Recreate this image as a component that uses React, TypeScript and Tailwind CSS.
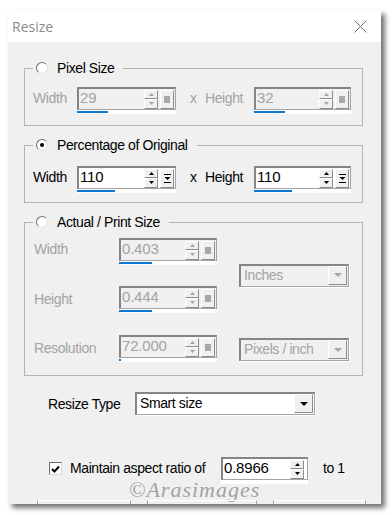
import React from "react";

const sans = "font-['Liberation_Sans',Arial,sans-serif] text-[14px] tracking-[-0.4px]";

function Arrow({ up, color }: { up?: boolean; color: string }) {
  return (
    <svg width="5" height="3" viewBox="0 0 5 3">
      <path d={up ? "M2.5 0L5 3H0z" : "M0 0H5L2.5 3z"} fill={color} />
    </svg>
  );
}

const raised =
  "bg-[#f0f0f0] border border-t-white border-l-white border-r-[#8c8c8c] border-b-[#8c8c8c]";

function SpinBtns({ disabled }: { disabled?: boolean }) {
  const c = disabled ? "#a5a5a5" : "#000";
  return (
    <div className="flex flex-col w-[14px] h-[19px] self-center">
      <div className={`flex-1 flex items-center justify-center ${raised}`}>
        <Arrow up color={c} />
      </div>
      <div className={`flex-1 flex items-center justify-center ${raised}`}>
        <Arrow color={c} />
      </div>
    </div>
  );
}

function ExtraBtn({ disabled }: { disabled?: boolean }) {
  return (
    <div className={`ml-[2px] mr-[1px] w-[14px] h-[19px] self-center flex items-center justify-center ${raised}`}>
      {disabled ? (
        <div className="w-[6px] h-[7px] bg-[#a8a8a8]" />
      ) : (
        <svg width="7" height="9" viewBox="0 0 7 9">
          <path d="M0 0.5H7" stroke="#000" strokeWidth="1" />
          <path d="M0.5 3H6.5L3.5 6z" fill="#000" />
          <path d="M0 8.5H7" stroke="#000" strokeWidth="1" />
        </svg>
      )}
    </div>
  );
}

function SpinInput({
  value,
  disabled,
  width,
  bar,
  extra = true,
}: {
  value: string;
  disabled?: boolean;
  width: string;
  bar?: string;
  extra?: boolean;
}) {
  return (
    <div className={`flex flex-col ${width}`}>
      <div
        className={`flex h-[23px] border-t-2 border-l-2 border-t-[#858585] border-l-[#858585] border-r border-b border-r-[#a3a3a3] border-b-[#a3a3a3] ${
          disabled ? "bg-[#f0f0f0] text-[#a3a3a3]" : "bg-white text-black"
        }`}
      >
        <div className="flex-1 pl-[1px] text-[15px] tracking-[-0.2px] leading-[17px]">{value}</div>
        <SpinBtns disabled={disabled} />
        {extra ? <ExtraBtn disabled={disabled} /> : <div className="w-[3px]" />}
      </div>
      <div className="h-[4px] bg-white pt-[1px]">
        {bar && <div className={`h-[2px] bg-[#0a78d4] ${bar}`} />}
      </div>
    </div>
  );
}

function Dropdown({ value, disabled, width }: { value: string; disabled?: boolean; width: string }) {
  return (
    <div className={`${width} border-r border-b border-white`}>
      <div
        className={`flex h-[23px] border-t-2 border-l-2 border-t-[#858585] border-l-[#858585] border-r border-b border-r-[#a3a3a3] border-b-[#a3a3a3] ${
          disabled ? "bg-[#f0f0f0] text-[#a3a3a3]" : "bg-white text-black"
        }`}
      >
        <div className="flex-1 pl-[3px] leading-[19px]">{value}</div>
        <div className={`w-[19px] h-[19px] mr-[1px] flex items-center justify-center ${raised}`}>
          <svg width="8" height="4" viewBox="0 0 8 4">
            <path d="M0 0H8L4 4z" fill={disabled ? "#a5a5a5" : "#000"} />
          </svg>
        </div>
      </div>
    </div>
  );
}

function Radio({ checked }: { checked?: boolean }) {
  return (
    <div className="w-[12px] h-[12px] rounded-full bg-white border border-t-[#6d6d6d] border-l-[#6d6d6d] border-r-[#e2e2e2] border-b-[#e2e2e2] flex items-center justify-center">
      {checked && <div className="w-[4px] h-[4px] rounded-full bg-black" />}
    </div>
  );
}

function Group({
  title,
  checked,
  className,
  children,
}: {
  title: string;
  checked?: boolean;
  className: string;
  children: React.ReactNode;
}) {
  return (
    <fieldset className={`ml-[16px] w-[339px] min-w-0 border border-[#b4b4b4] pl-[8px] pr-[8px] ${className}`}>
      <legend className="pl-[3px] pr-[9px]">
        <div className="flex items-center h-[16px] gap-[9px] text-black">
          <Radio checked={checked} />
          <span>{title}</span>
        </div>
      </legend>
      {children}
    </fieldset>
  );
}

export default function App() {
  return (
    <div className={`w-[392px] h-[515px] bg-white overflow-hidden ${sans}`}>
      <div className="mt-[10px] ml-[8px] w-[373px] h-[494px] shadow-[4px_4px_5px_rgba(0,0,0,0.55)] flex flex-col">
        <div className="h-[32px] bg-white flex items-center justify-between pl-[4px] pr-[14px]">
          <span className="font-['Open_Sans',sans-serif] text-[14px] tracking-normal text-[#8a8a8a]">
            Resize
          </span>
          <svg width="13" height="13" viewBox="0 0 13 13">
            <path d="M0.5 0.5L12.5 12.5M12.5 0.5L0.5 12.5" stroke="#6e6e6e" strokeWidth="1" />
          </svg>
        </div>

        <div className="flex-1 bg-[#f0f0f0] pt-[18px] overflow-hidden flex flex-col">
          <Group title="Pixel Size" className="pt-[11px] pb-[11px]">
            <div className="flex items-start text-[#a3a3a3]">
              <span className="w-[44px] leading-[23px]">Width</span>
              <SpinInput value="29" disabled width="w-[99px]" bar="w-[31px]" />
              <span className="ml-[14px] w-[15px] leading-[23px]">x</span>
              <span className="w-[49px] leading-[23px]">Height</span>
              <SpinInput value="32" disabled width="w-[97px]" bar="w-[31px]" />
            </div>
          </Group>

          <Group title="Percentage of Original" checked className="mt-[11px] pt-[13px] pb-[9px]">
            <div className="flex items-start text-black">
              <span className="w-[44px] leading-[23px]">Width</span>
              <SpinInput value="110" width="w-[99px]" bar="w-[38px]" />
              <span className="ml-[14px] w-[15px] leading-[23px]">x</span>
              <span className="w-[49px] leading-[23px]">Height</span>
              <SpinInput value="110" width="w-[97px]" bar="w-[38px]" />
            </div>
          </Group>

          <Group title="Actual / Print Size" className="mt-[11px] pt-[8px] pb-[14px]">
            <div className="grid grid-cols-[85px_120px_111px] grid-rows-[27px_27px_27px] gap-y-[21px] text-[#a3a3a3] pl-[1px]">
              <span className="leading-[23px] col-start-1 row-start-1">Width</span>
              <div className="col-start-2 row-start-1">
                <SpinInput value="0.403" disabled width="w-[98px]" bar="w-[33px]" />
              </div>
              <div className="col-start-3 row-start-1 row-span-2 self-center">
                <Dropdown value="Inches" disabled width="w-[111px]" />
              </div>
              <span className="leading-[23px] col-start-1 row-start-2 mt-[2px]">Height</span>
              <div className="col-start-2 row-start-2">
                <SpinInput value="0.444" disabled width="w-[98px]" bar="w-[33px]" />
              </div>
              <span className="leading-[23px] col-start-1 row-start-3 mt-[3px]">Resolution</span>
              <div className="col-start-2 row-start-3 mt-[1px]">
                <SpinInput value="72.000" disabled width="w-[98px]" bar="w-[2px]" />
              </div>
              <div className="col-start-3 row-start-3 mt-[4px]">
                <Dropdown value="Pixels / inch" disabled width="w-[111px]" />
              </div>
            </div>
          </Group>

          <div className="mt-[16px] pl-[40px] flex items-center text-black">
            <span className="w-[87px]">Resize Type</span>
            <Dropdown value="Smart size" width="w-[181px]" />
          </div>

          <div className="mt-[41px] pl-[41px] flex items-start text-black">
            <div className="mt-[5px] w-[13px] h-[13px] bg-white border border-t-[#6d6d6d] border-l-[#6d6d6d] border-r-[#dcdcdc] border-b-[#dcdcdc] flex items-center justify-center">
              <svg width="9" height="8" viewBox="0 0 9 8">
                <path d="M1 4L3.5 6.5L8 1.5" stroke="#000" strokeWidth="2" fill="none" />
              </svg>
            </div>
            <span className="ml-[8px] w-[151px] leading-[23px]">Maintain aspect ratio of</span>
            <SpinInput value="0.8966" width="w-[87px]" extra={false} />
            <span className="ml-[15px] leading-[23px]">to 1</span>
          </div>

          <div className="-mt-[4px] h-[20px] text-center font-['Liberation_Serif',serif] italic text-[22px] leading-[20px] tracking-[1px] text-[#a2a2a2]">
            ©Arasimages
          </div>

          <div className="flex pl-[29px] gap-[16px]">
            <div className="w-[94px] h-[4px] border-t border-x border-t-white border-x-[#a0a0a0]" />
            <div className="w-[110px] h-[4px] border-t border-x border-t-white border-x-[#a0a0a0]" />
            <div className="w-[93px] h-[4px] border-t border-x border-t-white border-x-[#a0a0a0]" />
          </div>
        </div>
      </div>
    </div>
  );
}
